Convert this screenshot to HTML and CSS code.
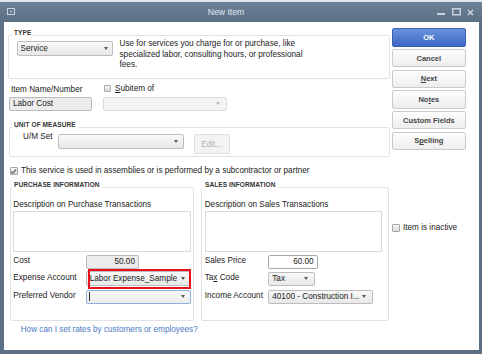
FILE: index.html
```html
<!DOCTYPE html>
<html>
<head>
<meta charset="utf-8">
<link rel="stylesheet" href="styles.css">
</head>
<body>
<div class="window">
  <div class="titlebar">
    <span class="sysicon"><svg width="8" height="7" viewBox="0 0 8 7"><rect x="0.5" y="0.5" width="7" height="6" fill="none" stroke="#c9d2dc"/><path d="M2.5 3 L5.5 3 L4 4.5 Z" fill="#c9d2dc"/></svg></span>
    <span class="title">New Item</span>
    <span class="controls">
      <svg width="9" height="8" viewBox="0 0 9 8"><rect x="0" y="5" width="8" height="2" fill="#c9d2dc"/></svg>
      <svg width="9" height="8" viewBox="0 0 9 8"><rect x="0.75" y="0.75" width="7.5" height="6" fill="none" stroke="#c9d2dc" stroke-width="1.5"/></svg>
      <svg width="7" height="7" viewBox="0 0 7 7"><path d="M1 1 L6 6 M6 1 L1 6" stroke="#c9d2dc" stroke-width="1.6"/></svg>
    </span>
  </div>
  <div class="content">
    <div class="main">
      <fieldset class="group type">
        <legend>TYPE</legend>
        <div class="type-body">
          <div class="dd service"><span class="dd-text">Service</span><span class="arr"></span></div>
          <p class="type-desc">Use for services you charge for or purchase, like specialized labor, consulting hours, or professional fees.</p>
        </div>
      </fieldset>

      <div class="name-row">
        <div class="name-col">
          <div class="lbl name-lbl">Item Name/Number</div>
          <div class="field name-field">Labor Cost</div>
        </div>
        <div class="sub-col">
          <div class="check-line sub-line"><span class="cb"></span><span><u>S</u>ubitem of</span></div>
          <div class="dd disabled sub-dd"><span class="arr"></span></div>
        </div>
      </div>

      <fieldset class="group uom">
        <legend>UNIT OF MEASURE</legend>
        <div class="uom-body">
          <span class="lbl uom-lbl">U/M Set</span>
          <div class="dd uom-dd"><span class="arr"></span></div>
          <div class="edit-btn">Edit...</div>
        </div>
      </fieldset>

      <div class="check-line assembly"><span class="cb checked"><svg width="7" height="7" viewBox="0 0 7 7"><path d="M1 3.6 L2.8 5.3 L6 1.5" fill="none" stroke="#6a6a6a" stroke-width="1.3"/></svg></span><span>This service is used in assemblies or is performed by a subcontractor or partner</span></div>

      <div class="info-row">
        <fieldset class="group info purchase">
          <legend>PURCHASE INFORMATION</legend>
          <div class="info-body">
            <div class="lbl desc-lbl">Description on Purchase Transactions</div>
            <div class="textarea"></div>
            <div class="frow first">
              <span class="lbl flbl">Cost</span>
              <div class="field num cost">50.00</div>
            </div>
            <div class="frow">
              <span class="lbl flbl">Expense Account</span>
              <div class="dd expense"><span class="dd-text">Labor Expense_Sample</span><span class="arr"></span><span class="annot"></span></div>
            </div>
            <div class="frow third">
              <span class="lbl flbl">Preferred Vendor</span>
              <div class="dd vendor"><span class="caret"></span><span class="arr"></span></div>
            </div>
          </div>
        </fieldset>
        <fieldset class="group info sales">
          <legend>SALES INFORMATION</legend>
          <div class="info-body">
            <div class="lbl desc-lbl">Description on Sales Transactions</div>
            <div class="textarea"></div>
            <div class="frow first">
              <span class="lbl flbl">Sales Price</span>
              <div class="field num price">60.00</div>
            </div>
            <div class="frow">
              <span class="lbl flbl">Ta<u>x</u> Code</span>
              <div class="dd tax"><span class="dd-text">Tax</span><span class="arr"></span></div>
            </div>
            <div class="frow third">
              <span class="lbl flbl">Income Account</span>
              <div class="dd income"><span class="dd-text">40100 - Construction I...</span><span class="arr"></span></div>
            </div>
          </div>
        </fieldset>
      </div>

      <a class="help-link">How can I set rates by customers or employees?</a>
    </div>

    <div class="side">
      <div class="buttons">
        <div class="btn ok">OK</div>
        <div class="btn">Cancel</div>
        <div class="btn"><span><u>N</u>ext</span></div>
        <div class="btn"><span>No<u>t</u>es</span></div>
        <div class="btn">Custom Fields</div>
        <div class="btn"><span>S<u>p</u>elling</span></div>
      </div>
      <div class="check-line inactive"><span class="cb"></span><span>Item is inactive</span></div>
    </div>
  </div>
</div>
</body>
</html>
```
FILE: styles.css
```css
* { box-sizing: border-box; }

html, body {
  margin: 0;
  padding: 0;
}

body {
  width: 482px;
  height: 354px;
  overflow: hidden;
  background: #e4e8ec;
  font-family: "Liberation Sans", Arial, sans-serif;
  font-size: 8.2px;
  color: #222;
}

.window {
  margin-top: 2px;
  height: 352px;
  display: flex;
  flex-direction: column;
  padding: 0 3px 4px 4px;
  background: #5b6f85;
}

.titlebar {
  height: 20px;
  display: flex;
  align-items: center;
  background: linear-gradient(#6d8197, #5a6e84);
  margin: 0 -3px 0 -4px;
  padding: 0 8px 0 7px;
}

.sysicon { display: flex; width: 8px; margin-top: -1px; }

.title {
  flex: 1;
  text-align: center;
  color: #e3e9ef;
  font-size: 8.6px;
}

.controls {
  display: flex;
  align-items: center;
  gap: 6px;
}

.content {
  flex: 1;
  display: flex;
  background: #fff;
  padding-left: 5px;
}

.main {
  width: 380.5px;
  padding-top: 7px;
}

.side {
  width: 75px;
  margin-left: 2.2px;
  padding-top: 6.3px;
}

/* group boxes */
.group {
  margin: 0;
  padding: 0;
  border: 1px solid #e1e1e1;
  border-radius: 2px;
  min-width: 0;
}

.group legend {
  font-size: 6.5px;
  font-weight: bold;
  line-height: 8px;
  padding: 0 2px 4px;
  margin-left: 2px;
  color: #333;
  letter-spacing: 0.1px;
}

.type {
  margin-left: -1.5px;
}

.type legend { margin-left: 3.5px; }

.type-body {
  display: flex;
  align-items: flex-start;
  padding: 0 0 7px 8px;
}

.type-desc {
  margin: -2px 0 0 7px;
  width: 192px;
  line-height: 10.5px;
}

/* dropdowns */
.dd {
  display: flex;
  align-items: center;
  border: 1px solid #bdbdbd;
  border-radius: 2px;
  background: linear-gradient(#f8f8f8, #e8e8e8);
  padding-left: 3px;
  overflow: hidden;
  white-space: nowrap;
}

.dd-text { flex: 1; overflow: hidden; }

.arr {
  margin-left: auto;
  margin-right: 5px;
  width: 0;
  height: 0;
  border-left: 2.5px solid transparent;
  border-right: 2.5px solid transparent;
  border-top: 3px solid #555;
  flex: none;
}

.dd.disabled {
  background: #f4f4f4;
  border-color: #dddddd;
}

.dd.disabled .arr { border-top-color: #b8b8b8; }

.service {
  width: 96px;
  height: 15px;
}

.service .arr { margin-right: 4px; }

.field {
  border: 1px solid #b9b9b9;
  border-radius: 2px;
  background: #ececec;
  padding-left: 3px;
  display: flex;
  align-items: center;
}

.field.num {
  justify-content: flex-end;
  padding: 0 3px 0 0;
}

/* name row */
.name-row {
  display: flex;
  margin-top: 6px;
}

.name-col { width: 82.7px; }

.lbl { line-height: 10px; }

.name-lbl { padding-left: 2px; }

.name-field {
  margin-top: 2px;
  height: 14.5px;
}

.sub-col {
  margin-left: 11.6px;
  width: 123.4px;
}

.check-line {
  display: flex;
  align-items: center;
  line-height: 10px;
}

.cb {
  width: 7.5px;
  height: 7.5px;
  border: 1px solid #a9a9a9;
  border-radius: 1px;
  background: linear-gradient(#f6f6f6, #dadada);
  display: flex;
  align-items: center;
  justify-content: center;
  flex: none;
  overflow: hidden;
}

.cb svg { flex: none; }

.sub-line { padding-left: 0.7px; margin-top: -1px; }
.sub-line .cb { margin-right: 3.5px; }

.sub-dd {
  margin-top: 3px;
  height: 14px;
}

.sub-dd .arr { margin-right: 6px; }

/* unit of measure */
.uom { margin-top: 10px; }

.uom-body {
  display: flex;
  align-items: flex-start;
  padding: 1px 0 2px 13px;
}

.uom-lbl {
  width: 35.4px;
  margin-top: -2px;
}

.uom-dd {
  width: 125.3px;
  height: 15.3px;
}

.edit-btn {
  margin-left: 10px;
  width: 36px;
  height: 20px;
  border: 1px solid #e2e2e2;
  border-radius: 2px;
  background: #f3f3f3;
  color: #b3b3b3;
  display: flex;
  align-items: center;
  justify-content: center;
}

/* assembly checkbox */
.assembly {
  margin-top: 9px;
  padding-left: 1px;
}

.assembly .cb { margin-right: 3.5px; }

/* info groups */
.info-row {
  display: flex;
  margin-top: 5.3px;
  gap: 6.7px;
  padding-left: 0.7px;
}

.info legend { margin-left: 1.3px; }

.purchase { width: 184.3px; }
.sales { width: 188.3px; }

.info-body {
  padding: 6.4px 2.3px 16px 2.6px;
}

.sales .info-body { padding: 6.4px 6.3px 16px 3px; }

.desc-lbl { margin-bottom: 1.3px; }

.textarea {
  height: 40.7px;
  border: 1px solid #dadada;
  background: #fff;
}

.frow {
  display: flex;
  align-items: center;
  height: 14px;
  margin-top: 3px;
}

.frow.first { margin-top: 3.3px; }
.frow.third { margin-top: 4px; }

.flbl {
  width: 72.4px;
  margin-bottom: 2px;
  white-space: nowrap;
}

.sales .flbl { width: 63.6px; }

.cost {
  width: 53.3px;
  height: 13.5px;
}

.expense {
  width: 105px;
  height: 15px;
  overflow: visible;
  position: relative;
}

.annot {
  position: absolute;
  left: 1px;
  right: -1px;
  top: -3px;
  bottom: -4px;
  border: 2px solid #e8101a;
  pointer-events: none;
}

.vendor {
  width: 105px;
  height: 13.5px;
  border-color: #8fb0dc;
  background: linear-gradient(#f7f7f7, #ececec);
}

.caret {
  width: 1px;
  height: 9px;
  background: #333;
  margin-left: -1px;
}

.price {
  width: 49.4px;
  height: 14px;
  background: #fff;
  border-color: #a9a9a9;
}

.tax {
  width: 47px;
  height: 14.5px;
}

.tax .arr { margin-right: 6px; }

.income {
  width: 105px;
  height: 13.5px;
}

.income .arr { margin-right: 6px; }

.help-link {
  display: block;
  margin-top: 4.5px;
  padding-left: 11.7px;
  line-height: 10px;
  color: #4a78c4;
  text-decoration: none;
}

/* side buttons */
.buttons {
  display: flex;
  flex-direction: column;
  gap: 2.3px;
  width: 74.3px;
}

.btn {
  height: 18.4px;
  border: 1px solid #cbcbcb;
  border-radius: 2px;
  background: linear-gradient(#fefefe, #ededed);
  font-weight: bold;
  font-size: 7.5px;
  color: #454545;
  display: flex;
  align-items: center;
  justify-content: center;
}

.btn.ok {
  background: linear-gradient(#6893dc, #3e68c3);
  border-color: #3b60ab;
  color: #fff;
}

.inactive {
  margin-top: 72.7px;
  padding-left: 0.3px;
}

.inactive .cb {
  width: 8px;
  height: 8px;
  margin-right: 3px;
}
```
